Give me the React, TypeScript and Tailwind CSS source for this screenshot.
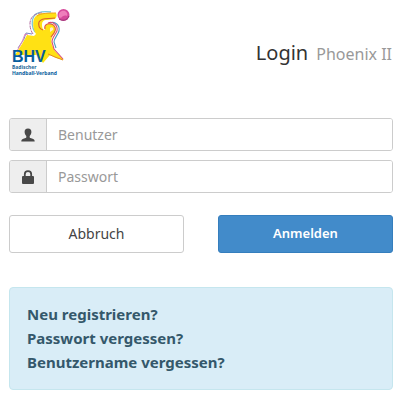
import type { ReactNode } from "react";

const links = ["Neu registrieren?", "Passwort vergessen?", "Benutzername vergessen?"];

function Logo() {
  return (
    <svg className="h-[70px] w-[62px]" viewBox="10 8 62 70" fill="none" role="img" aria-label="BHV Badischer Handball-Verband">
      {/* offset contours behind the player */}
      <path d="M35 32C32 28 31 21 34 16C37 12 43 11 51 12" stroke="#7cc6d6" strokeWidth="1.3" />
      <path d="M33 34C30 30 29 23 31 19C33 15 37 13 42 13" stroke="#b06a9f" strokeWidth="1" strokeDasharray="4 1" />
      <path d="M32 34L26 33L24 39L18 48" stroke="#7b86bd" strokeWidth="1" />
      <path d="M28 35L25 34L22 42L17 51" stroke="#e58abb" strokeWidth="1" />

      <path
        d="M36 34C33 30 32 21 35 17C38 13 43 13 48 13L56 13C57 15 57 17 55 19L47 20C43 20 42 22 42 25C42 28 43 30 45 30C44 26 47 23 51 24C56 25 57 31 54 34C51 37 51 41 52 45L55 51L64 60L56 58L50 55L43 63L37 55H15L22 44L27 35L34 36Z"
        fill="#ffe114"
      />
      <path d="M43 30C39 29 38 25 39 22C41 18 46 19 55 18" stroke="#d9602c" strokeWidth="1.1" />
      <path d="M37 16C41 13 49 13 56 13" stroke="#f0a11d" strokeWidth="1" />
      <path d="M50 28C52 26 54 28 53 30L50 32Z" fill="#fff0d2" />
      <path d="M45 29C44 25 47 23 51 24C55 25 57 29 54 33L51 37" stroke="#dd553d" strokeWidth="1.1" />
      <path d="M50 23C55 21 60 25 59 31C58 35 54 38 54 42L56 48" stroke="#4f9bc4" strokeWidth="1.1" />
      <path d="M48 23C53 21 58 25 57 31C55 35 52 38 52 42L54 49L63 59" stroke="#d94c76" strokeWidth="1.1" />
      <path d="M48 54L55 57L63 60" stroke="#e58a22" strokeWidth="1" />

      <circle cx="63.5" cy="15" r="6" fill="#d64a9b" />
      <path d="M59 17C58 13 61 10 65 11C67 12 68 14 67 16C65 15 62 16 61 18Z" fill="#ee7fbb" />
      <path d="M59 19C62 21 67 21 69 16" stroke="#963675" strokeWidth="1" />

      <text x="12" y="62" fill="#075d9d" fontFamily="Liberation Sans, sans-serif" fontSize="16" fontWeight="700">BHV</text>
      <text x="12" y="69" fill="#176697" fontFamily="Noto Sans, sans-serif" fontSize="5" fontWeight="700">Badischer</text>
      <text x="12" y="75" fill="#075d9d" fontFamily="Noto Sans, sans-serif" fontSize="5" fontWeight="700">Handball-Verband</text>
    </svg>
  );
}

function UserIcon() {
  return (
    <svg className="size-3.5" viewBox="0 0 14 14" fill="#484848" aria-hidden="true">
      <path d="M7 .5C4.6.5 3.4 2 3.6 4.3C3.8 6 4.5 7.3 5.3 8V9.2C5.3 9.8 4.3 10.1 3 10.6C1.3 11.2.3 11.8.3 13.5H13.7C13.7 11.8 12.7 11.2 11 10.6C9.7 10.1 8.7 9.8 8.7 9.2V8C9.5 7.3 10.2 6 10.4 4.3C10.6 2 9.4.5 7 .5Z" />
    </svg>
  );
}

function LockIcon() {
  return (
    <svg className="size-3.5" viewBox="0 0 14 14" aria-hidden="true">
      <path d="M3.8 7V4.2C3.8 2.2 5 1.2 7 1.2S10.2 2.2 10.2 4.2V7" fill="none" stroke="#484848" strokeWidth="1.8" />
      <rect x="1" y="6" width="12" height="8" rx="1" fill="#484848" />
    </svg>
  );
}

function Field({ id, label, type, icon }: { id: string; label: string; type: string; icon: ReactNode }) {
  return (
    <div className="flex h-[33px] overflow-hidden rounded-[3px] border border-[#ccc]">
      <label htmlFor={id} aria-label={label} className="flex w-9 items-center justify-center bg-[#eee]">
        {icon}
      </label>
      <input
        id={id}
        type={type}
        placeholder={label}
        className="min-w-0 flex-1 border-l border-[#ccc] bg-white px-[11px] text-sm text-[#555] outline-none placeholder:text-[#999]"
      />
    </div>
  );
}

export default function App() {
  return (
    <main className="bg-white pt-2 pr-[7px] pb-2.5 pl-[9px] font-['Noto_Sans',sans-serif]">
      <header className="flex items-start justify-between px-px">
        <Logo />
        <h1 className="flex items-baseline gap-2 pt-[30px] text-xl leading-[30px] text-[#333]">
          Login <small className="text-base text-[#999]">Phoenix II</small>
        </h1>
      </header>

      <form className="mt-10" onSubmit={(event) => event.preventDefault()}>
        <div className="grid gap-[9px]">
          <Field id="benutzer" label="Benutzer" type="text" icon={<UserIcon />} />
          <Field id="passwort" label="Passwort" type="password" icon={<LockIcon />} />
        </div>
        <div className="mt-[22px] grid grid-cols-2 gap-[34px]">
          <button type="button" className="h-[38px] rounded-[3px] border border-[#ccc] bg-white text-sm text-[#444]">
            Abbruch
          </button>
          <button type="submit" className="h-[38px] rounded-[3px] border border-[#357ebd] bg-[#428bca] text-[13px] font-semibold text-white">
            Anmelden
          </button>
        </div>
      </form>

      <nav className="mt-[34px] rounded border border-[#c5e6ee] bg-[#d9edf7] px-[17px] pt-[14px] pb-[15px]">
        <ul>
          {links.map((link) => (
            <li key={link} className="text-[15px] leading-6 font-bold text-[#34586b]">
              <a href="#">{link}</a>
            </li>
          ))}
        </ul>
      </nav>
    </main>
  );
}
